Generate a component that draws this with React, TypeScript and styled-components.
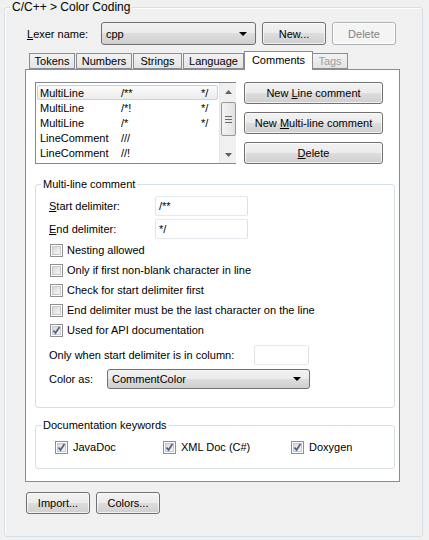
import React from 'react';
import styled, { createGlobalStyle } from 'styled-components';

const GlobalStyle = createGlobalStyle`
  html, body { margin: 0; padding: 0; background: #f0f0f0; }
  body { font-family: "Liberation Sans", Arial, sans-serif; font-size: 11px; color: #000; }
  * { box-sizing: border-box; }
`;

const Page = styled.div`
  width: 429px;
  height: 540px;
  padding: 7px 0 0 4px;
`;

const Outer = styled.div`
  position: relative;
  width: 419px;
  height: 530px;
  border: 1px solid #d5dfe5;
  border-radius: 3px;
  padding: 14px 0 0 20px;
  box-shadow: inset 1px 1px 0 #fff;
`;

const Title = styled.span<{ $left: number; $bg: string; $size?: number }>`
  position: absolute;
  top: -8px;
  left: ${p => p.$left}px;
  padding: 0 2px;
  line-height: 14px;
  font-size: ${p => p.$size ?? 11}px;
  background: ${p => p.$bg};
`;

const LexerRow = styled.div`
  display: flex;
  align-items: center;
  height: 23px;
`;

const Label = styled.span<{ $w: number }>`
  width: ${p => p.$w}px;
  flex: none;
  white-space: nowrap;
`;

const LexerLabel = styled(Label)`
  margin-left: 2px;
`;

const Combo = styled.div<{ $w: number; $h: number }>`
  width: ${p => p.$w}px;
  height: ${p => p.$h}px;
  border: 1px solid #707070;
  border-radius: 3px;
  background: linear-gradient(#f2f2f2 0%, #ebebeb 50%, #dddddd 50%, #cfcfcf 100%);
  display: flex;
  align-items: center;
  justify-content: space-between;
  padding: 0 8px 0 4px;
`;

const ComboArrow = styled.span`
  width: 0;
  height: 0;
  border-left: 4px solid transparent;
  border-right: 4px solid transparent;
  border-top: 4px solid #000;
`;

const Button = styled.button<{ $w: number; $h?: number; $disabled?: boolean }>`
  width: ${p => p.$w}px;
  height: ${p => p.$h ?? 23}px;
  flex: none;
  font: inherit;
  padding: 0;
  border: 1px solid ${p => (p.$disabled ? '#adb2b5' : '#707070')};
  border-radius: 3px;
  color: ${p => (p.$disabled ? '#838383' : '#000')};
  background: ${p =>
    p.$disabled
      ? '#f4f4f4'
      : 'linear-gradient(#f2f2f2 0%, #ebebeb 50%, #dddddd 50%, #cfcfcf 100%)'};
  box-shadow: inset 0 0 0 1px rgba(255, 255, 255, 0.7);
`;

const TopButton = styled(Button)`
  margin-left: 6px;
`;

const TabStrip = styled.div`
  display: flex;
  align-items: flex-end;
  height: 18px;
  margin-top: 6px;
  padding-left: 4px;
`;

const Tab = styled.div<{ $w: number; $sel?: boolean; $disabled?: boolean }>`
  width: ${p => p.$w}px;
  height: ${p => (p.$sel ? 19 : 16)}px;
  margin: ${p => (p.$sel ? '0 -1px -1px -1px' : '0 1px 0 0')};
  position: relative;
  z-index: ${p => (p.$sel ? 1 : 0)};
  border: 1px solid #898c95;
  border-bottom: ${p => (p.$sel ? 'none' : '1px solid #898c95')};
  background: ${p => (p.$sel ? '#fff' : 'linear-gradient(#f2f2f2, #e4e4e4)')};
  color: ${p => (p.$disabled ? '#a0a0a0' : '#000')};
  display: flex;
  align-items: center;
  justify-content: center;
  padding-bottom: ${p => (p.$sel ? 3 : 0)}px;
  white-space: nowrap;
`;

const Pane = styled.div`
  width: 375px;
  height: 413px;
  border: 1px solid #898c95;
  background: #fff;
  padding: 12px 0 0 9px;
`;

const TopSection = styled.div`
  display: flex;
  align-items: flex-start;
`;

const List = styled.div`
  width: 201px;
  height: 82px;
  border: 1px solid #828790;
  display: flex;
  background: #fff;
`;

const ListItems = styled.div`
  flex: 1;
  padding: 2px 1px 0 1px;
`;

const ListRow = styled.div<{ $sel?: boolean }>`
  display: flex;
  height: 15px;
  align-items: center;
  padding-left: 2px;
  border: 1px solid ${p => (p.$sel ? '#d0d0d0' : 'transparent')};
  border-radius: 2px;
  background: ${p => (p.$sel ? 'linear-gradient(#fafafa, #ececec)' : 'transparent')};
`;

const ListCell = styled.span<{ $w: number }>`
  width: ${p => p.$w}px;
  flex: none;
  white-space: nowrap;
`;

const Scrollbar = styled.div`
  width: 17px;
  flex: none;
  background: #f0f0f0;
  border-left: 1px solid #e6e6e6;
  display: flex;
  flex-direction: column;
  align-items: center;
`;

const ScrollArrow = styled.div`
  height: 17px;
  display: flex;
  align-items: center;
  justify-content: center;
`;

const Thumb = styled.div`
  width: 15px;
  height: 34px;
  margin-top: 2px;
  border: 1px solid #979797;
  border-radius: 2px;
  background: linear-gradient(90deg, #f3f3f3, #e2e2e2);
  display: flex;
  flex-direction: column;
  align-items: center;
  justify-content: center;
  gap: 2px;
`;

const Grip = styled.span`
  width: 7px;
  height: 1px;
  background: #6a6a6a;
`;

const Spacer = styled.div`
  flex: 1;
`;

const SideButtons = styled.div`
  display: flex;
  flex-direction: column;
  gap: 8px;
  margin-left: 8px;
`;

const Box = styled.div<{ $w: number; $h: number; $mt: number }>`
  position: relative;
  width: ${p => p.$w}px;
  height: ${p => p.$h}px;
  margin-top: ${p => p.$mt}px;
  border: 1px solid #d5dfe5;
  border-radius: 3px;
  box-shadow: inset 1px 1px 0 #fff;
`;

const MultiBody = styled.div`
  padding: 11px 0 0 13px;
  display: flex;
  flex-direction: column;
`;

const FieldRow = styled.div<{ $mt?: number }>`
  display: flex;
  align-items: center;
  height: 20px;
  margin-top: ${p => p.$mt ?? 0}px;
`;

const TextInput = styled.div<{ $w: number }>`
  width: ${p => p.$w}px;
  height: 20px;
  border: 1px solid #abadb3;
  border-top-color: #e3e9ef;
  border-left-color: #e2e3ea;
  border-right-color: #dbdfe6;
  border-bottom-color: #e3e9ef;
  border-radius: 2px;
  background: #fff;
  display: flex;
  align-items: center;
  padding-left: 3px;
`;

const CheckRow = styled.label<{ $mt?: number }>`
  display: flex;
  align-items: center;
  gap: 4px;
  height: 20px;
  margin-top: ${p => p.$mt ?? 0}px;
  padding-left: 1px;
  white-space: nowrap;
`;

const CheckBox = styled.span`
  width: 13px;
  height: 13px;
  flex: none;
  border: 1px solid #8f8f8f;
  background: #fff;
  padding: 1px;
  display: flex;
`;

const CheckInner = styled.span`
  flex: 1;
  background: linear-gradient(135deg, #dadada, #f6f6f6);
  border: 1px solid #c8c8c8;
  display: flex;
  align-items: center;
  justify-content: center;
  position: relative;
`;

const CheckMark = styled.svg`
  position: absolute;
  left: -1px;
  top: -1px;
`;

const DocBody = styled.div`
  display: grid;
  grid-template-columns: 108px 128px 1fr;
  padding: 11px 0 0 18px;
`;

const DocCheck = styled(CheckRow)`
  gap: 5px;
`;

const BottomRow = styled.div`
  display: flex;
  gap: 6px;
  margin: 10px 0 0 1px;
`;

const Check: React.FC<{ checked?: boolean }> = ({ checked }) => (
  <CheckBox>
    <CheckInner>
      {checked && (
        <CheckMark width="9" height="9" viewBox="0 0 9 9">
          <path d="M1.5 4.5 L3.5 7 L7.5 1" fill="none" stroke="#4e5f8f" strokeWidth="1.7" />
        </CheckMark>
      )}
    </CheckInner>
  </CheckBox>
);

const Up = () => (
  <svg width="7" height="4" viewBox="0 0 7 4"><path d="M0 4 L3.5 0 L7 4 Z" fill="#606060" /></svg>
);
const Down = () => (
  <svg width="7" height="4" viewBox="0 0 7 4"><path d="M0 0 L3.5 4 L7 0 Z" fill="#606060" /></svg>
);

const rows = [
  ['MultiLine', '/**', '*/'],
  ['MultiLine', '/*!', '*/'],
  ['MultiLine', '/*', '*/'],
  ['LineComment', '///', ''],
  ['LineComment', '//!', ''],
];

const tabs: { t: string; w: number; sel?: boolean; dis?: boolean }[] = [
  { t: 'Tokens', w: 46 },
  { t: 'Numbers', w: 56 },
  { t: 'Strings', w: 49 },
  { t: 'Language', w: 61 },
  { t: 'Comments', w: 69, sel: true },
  { t: 'Tags', w: 36, dis: true },
];

export default function App() {
  return (
    <Page>
      <GlobalStyle />
      <Outer>
        <Title $left={5} $bg="#f0f0f0" $size={12}>C/C++ &gt; Color Coding</Title>
        <LexerRow>
          <LexerLabel $w={74}><u>L</u>exer name:</LexerLabel>
          <Combo $w={155} $h={23}>
            <span>cpp</span>
            <ComboArrow />
          </Combo>
          <TopButton $w={64}>New...</TopButton>
          <TopButton $w={64} $disabled>Delete</TopButton>
        </LexerRow>
        <TabStrip>
          {tabs.map(t => (
            <Tab key={t.t} $w={t.w} $sel={t.sel} $disabled={t.dis}>{t.t}</Tab>
          ))}
        </TabStrip>
        <Pane>
          <TopSection>
            <List>
              <ListItems>
                {rows.map((r, i) => (
                  <ListRow key={i} $sel={i === 0}>
                    <ListCell $w={81}>{r[0]}</ListCell>
                    <ListCell $w={80}>{r[1]}</ListCell>
                    <ListCell $w={16}>{r[2]}</ListCell>
                  </ListRow>
                ))}
              </ListItems>
              <Scrollbar>
                <ScrollArrow><Up /></ScrollArrow>
                <Thumb><Grip /><Grip /><Grip /></Thumb>
                <Spacer />
                <ScrollArrow><Down /></ScrollArrow>
              </Scrollbar>
            </List>
            <SideButtons>
              <Button $w={139} $h={22}>New <u>L</u>ine comment</Button>
              <Button $w={139} $h={22}>New <u>M</u>ulti-line comment</Button>
              <Button $w={139} $h={22}><u>D</u>elete</Button>
            </SideButtons>
          </TopSection>
          <Box $w={360} $h={224} $mt={20}>
            <Title $left={5} $bg="#fff">Multi-line comment</Title>
            <MultiBody>
              <FieldRow>
                <Label $w={106}><u>S</u>tart delimiter:</Label>
                <TextInput $w={93}>/**</TextInput>
              </FieldRow>
              <FieldRow $mt={3}>
                <Label $w={106}><u>E</u>nd delimiter:</Label>
                <TextInput $w={93}>*/</TextInput>
              </FieldRow>
              <CheckRow $mt={1}><Check />Nesting allowed</CheckRow>
              <CheckRow><Check />Only if first non-blank character in line</CheckRow>
              <CheckRow><Check />Check for start delimiter first</CheckRow>
              <CheckRow><Check />End delimiter must be the last character on the line</CheckRow>
              <CheckRow><Check checked />Used for API documentation</CheckRow>
              <FieldRow $mt={5}>
                <Label $w={205}>Only when start delimiter is in column:</Label>
                <TextInput $w={55} />
              </FieldRow>
              <FieldRow $mt={4}>
                <Label $w={58}>Color as:</Label>
                <Combo $w={203} $h={20}>
                  <span>CommentColor</span>
                  <ComboArrow />
                </Combo>
              </FieldRow>
            </MultiBody>
          </Box>
          <Box $w={360} $h={44} $mt={17}>
            <Title $left={5} $bg="#fff">Documentation keywords</Title>
            <DocBody>
              <DocCheck><Check checked />JavaDoc</DocCheck>
              <DocCheck><Check checked />XML Doc (C#)</DocCheck>
              <DocCheck><Check checked />Doxygen</DocCheck>
            </DocBody>
          </Box>
        </Pane>
        <BottomRow>
          <Button $w={64} $h={22}>Import...</Button>
          <Button $w={64} $h={22}>Colors...</Button>
        </BottomRow>
      </Outer>
    </Page>
  );
}
